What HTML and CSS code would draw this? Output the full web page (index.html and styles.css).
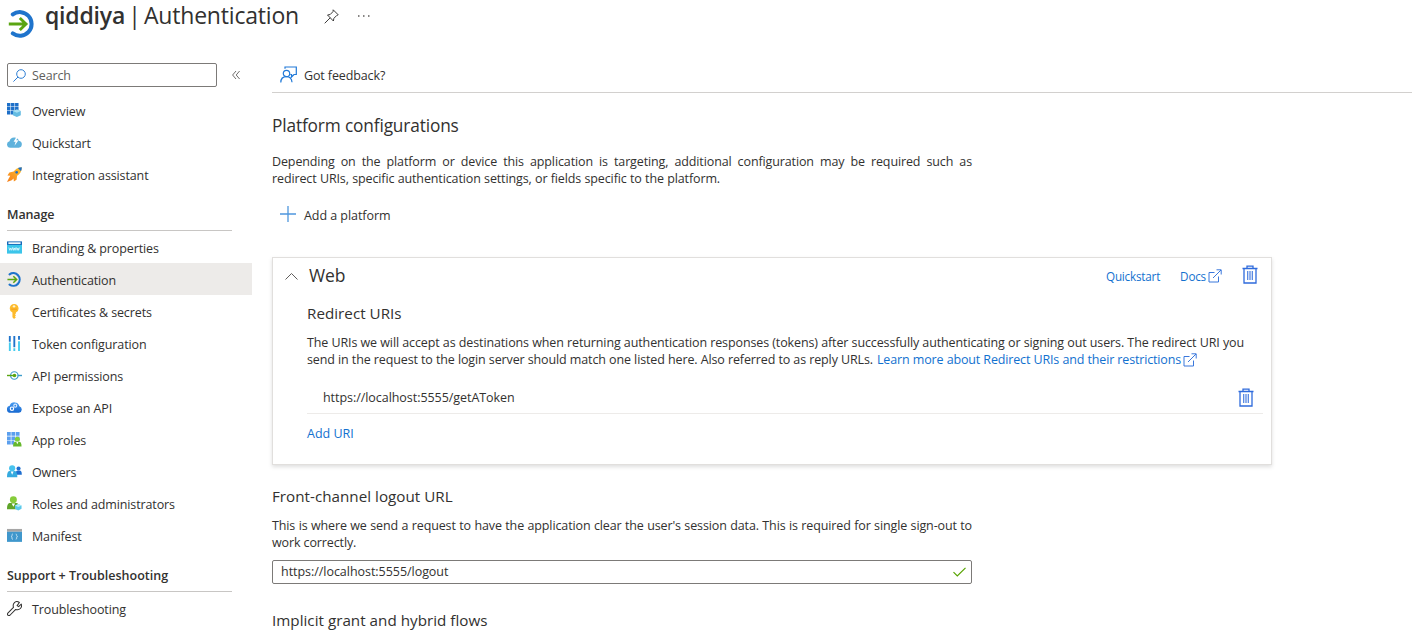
FILE: index.html
```html
<!DOCTYPE html>
<html lang="en">
<head>
<meta charset="utf-8">
<title>qiddiya | Authentication</title>
<link rel="stylesheet" href="styles.css">
</head>
<body>
<svg width="0" height="0" class="defs" aria-hidden="true">
  <defs>
    <linearGradient id="cloud" x1="0" y1="0" x2="0" y2="1"><stop offset="0" stop-color="#4a9cf0"/><stop offset="1" stop-color="#1668d0"/></linearGradient>
    <linearGradient id="fire" x1="1" y1="0" x2="0" y2="1"><stop offset="0" stop-color="#ffc62e"/><stop offset="1" stop-color="#f57c1a"/></linearGradient>
    <symbol id="auth" viewBox="0 0 28 28">
      <path d="M4.800 4.400A11.800 11.800 0 1 1 4.800 23.400" fill="none" stroke="#1f74cc" stroke-width="4" stroke-linecap="round"/>
      <path d="M.8 14H18M11.800 8l6.200 6-6.200 6" fill="none" stroke="#5aa512" stroke-width="2.900"/>
    </symbol>
    <symbol id="trash" viewBox="0 0 16 19">
      <path d="M.5 3.500h15M5 3V1.200h6V3M2 4v14h12V4" fill="none" stroke="#2f6bdc" stroke-width="1.300"/>
      <path d="M5.700 6v9M8 6v9M10.300 6v9" stroke="#4a7fe0" stroke-width="1.200"/>
    </symbol>
    <symbol id="ext" viewBox="0 0 14 14">
      <path d="M6.500 3.500H1v9.500h9.500V7.500M5 9l8-8M8.500.8h4.700v4.700" fill="none" stroke="#3b78dc" stroke-width="1"/>
    </symbol>
  </defs>
</svg>

<header class="header">
  <svg class="logo"><use href="#auth"/></svg>
  <h1 class="title"><b>qiddiya</b><span class="bar">|</span><span class="page-name">Authentication</span></h1>
  <svg class="pin" viewBox="0 0 15 15"><path d="M9.200.8l5 5-1.500.7-2.800 2.800-.5 2.700L3.500 6l2.700-.5L9 2.600zM6.200 8.800L.7 14.300" fill="none" stroke="#3c3b3a" stroke-width="1"/></svg>
  <svg class="dots" viewBox="0 0 12 2"><path d="M0 .3h1.500v1.400H0zM5 .3h1.500v1.400H5zM10 .3h1.500v1.400H10z" fill="#605e5c"/></svg>
</header>

<div class="body">
  <nav class="sidebar">
    <div class="search-row">
      <div class="search">
        <svg class="glass" viewBox="0 0 13 13"><circle cx="8" cy="5" r="4.300" fill="none" stroke="#2f7fd4"/><path d="M5 8L.4 12.600" stroke="#2f7fd4"/></svg>
        <span>Search</span>
      </div>
      <svg class="collapse" viewBox="0 0 8 8"><path d="M4 0L.6 4 4 8M7.600 0L4.200 4l3.400 4" fill="none" stroke="#605e5c" stroke-width=".9"/></svg>
    </div>
    <a class="item"><svg viewBox="0 0 16 16"><path d="M0 0h3.700v3.700H0zM4.300 0h3.700v3.700H4.300zM8.600 0h3.700v3.700H8.600zM0 4.300h3.700v3.700H0zM4.300 4.300h3.700v3.700H4.300zM8.600 4.300h3.700v3.700H8.600zM0 8.600h3.700v3.700H0zM4.300 8.600h3.700v3.700H4.300z" fill="#1d6fc8"/><path d="M10.500 6.800l4.200 1.600v4.600L10.500 15l-4.200-2V8.400z" fill="#65bce2"/><path d="M10.500 6.800l4.200 1.600-4.200 2-4.200-2z" fill="#a9e0f3"/></svg><span>Overview</span></a>
    <a class="item"><svg viewBox="0 0 16 16"><path d="M3.500 13.500A3.500 3.500 0 0 1 2.700 6.600 5.300 5.300 0 0 1 12.700 6 3.800 3.800 0 0 1 12.600 13.500z" fill="#5fb2dc"/><path d="M10.300 1.500L7 7.300h2.200L8 11.500l4.300-6H9.800L12.300 1.500z" fill="#fff"/></svg><span>Quickstart</span></a>
    <a class="item"><svg viewBox="0 0 16 16"><path d="M15.800.2c-4 .2-7 2-8.700 4.700L2.500 5.800.5 9l3 .2L2 12l-2 4 5-2 2-1.800.3 3.300 2.900-2 .6-4.300C13.800 7.500 15.800 4.500 15.800.2z" fill="url(#fire)"/><path d="M15.800.2c-1.600 0-3 .4-4.200.9l3.300 3.300c.6-1.300.9-2.700.9-4.200z" fill="#1d6fc8"/><circle cx="10.300" cy="5.700" r="1.400" fill="#1d6fc8"/></svg><span>Integration assistant</span></a>

    <h2 class="group">Manage</h2>
    <a class="item"><svg viewBox="0 0 16 16"><path d="M0 1.500h16v4H0z" fill="#1668b8"/><path d="M1.500 2.500h13v1.700h-13z" fill="#fff"/><path d="M0 5.200h16v9.300H0z" fill="#3bc5ea"/><path d="M2 8l1 3 1-2.500 1 2.500 1-3M6.200 8l.8 3 .8-2.500.8 2.500.8-3M10 8l.8 3 .8-2.500.8 2.500.8-3" fill="none" stroke="#e6fbff" stroke-width=".8"/></svg><span>Branding &amp; properties</span></a>
    <a class="item selected"><svg><use href="#auth"/></svg><span>Authentication</span></a>
    <a class="item"><svg viewBox="0 0 16 16"><path d="M7.500 0A4.700 4.700 0 0 1 9.500 9v1l-1 1 1 1-1 1.200 1 .9-2 1.900-1.700-1.800V9A4.700 4.700 0 0 1 7.500 0z" fill="#fdbb2d"/><circle cx="7.500" cy="2.500" r="1.300" fill="#fff3cf"/><path d="M4.500 5.500h6" stroke="#f29a1b" stroke-width="1"/></svg><span>Certificates &amp; secrets</span></a>
    <a class="item"><svg viewBox="0 0 16 16"><path d="M2 0h2v6H2zM6.800 0h2v12H6.800zM11.800 0h2v4h-2z" fill="#1f74cc"/><path d="M2 7h2v9H2zM6.800 13h2v3H6.800zM11.800 5.500h2V16h-2z" fill="#45cbee"/></svg><span>Token configuration</span></a>
    <a class="item"><svg viewBox="0 0 16 16"><circle cx="7.800" cy="8" r="4" fill="none" stroke="#3e9dcc" stroke-width="1.300"/><path d="M11.500 8H16" stroke="#3e9dcc" stroke-width="1.500"/><path d="M0 8h8" stroke="#5aa512" stroke-width="1.500"/><circle cx="8" cy="8" r="1.900" fill="#5aa512"/></svg><span>API permissions</span></a>
    <a class="item"><svg viewBox="0 0 16 16"><path d="M3.800 13.700A3.900 3.900 0 0 1 2.900 6 5.400 5.400 0 0 1 13.200 6.700a3.600 3.600 0 0 1-.5 7z" fill="url(#cloud)"/><circle cx="5.300" cy="9.300" r="1.800" fill="none" stroke="#fff" stroke-width="1.200"/><circle cx="8.800" cy="6" r="1.600" fill="none" stroke="#d5e8ff" stroke-width="1.200"/></svg><span>Expose an API</span></a>
    <a class="item"><svg viewBox="0 0 16 16"><path d="M0 0h4v4H0zM4.700 0h4v4h-4zM9.400 0h4v4h-4zM0 4.700h4v4H0zM4.700 4.700h4v4h-4zM9.400 4.700h4v4h-4zM0 9.400h4v4H0zM4.700 9.400h3v4h-3z" fill="#5b9fee"/><path d="M6.500 15.500c0-3.500 1-5 2.500-5h4c1.500 0 2.500 1.500 2.500 5z" fill="#66b82c"/><circle cx="11" cy="7.700" r="2.700" fill="#80cf3a"/><path d="M9.800 10.500h2.400L11 13z" fill="#fff"/></svg><span>App roles</span></a>
    <a class="item"><svg viewBox="0 0 16 16"><path d="M9 11.500c0-3.500 1-4.500 2.500-4.500h2c1.500 0 2.300 1.300 2.300 4.500z" fill="#1f6fd0"/><circle cx="12.300" cy="4.800" r="2.200" fill="#1f6fd0"/><path d="M0 14c0-4.500 1-6.500 3-6.500h5c2 0 3 2 3 6.500z" fill="#35aadf"/><circle cx="5.500" cy="4.500" r="3.300" fill="#48c3ee"/><path d="M4 8h3l-1.500 3.500z" fill="#fff"/></svg><span>Owners</span></a>
    <a class="item"><svg viewBox="0 0 16 16"><path d="M0 14c0-4.500 1.200-6.500 3.500-6.500h6c2.300 0 3.500 2 3.500 6.500z" fill="#5fa52a"/><circle cx="6.800" cy="4" r="3.700" fill="#86cc3a"/><path d="M5 8h3.600l-1.800 3.500z" fill="#fff"/><path d="M12 8.500l3.500 1.700v3.300L12 15.500l-3.500-2v-3.300z" fill="#5cc9ea"/><path d="M12 8.500l3.500 1.700-3.500 1.600-3.500-1.600z" fill="#b0ecf8"/></svg><span>Roles and administrators</span></a>
    <a class="item"><svg viewBox="0 0 16 16"><path d="M0 1h16v3H0z" fill="#a6a6a6"/><path d="M0 4h16v10.800H0z" fill="#3f97cc"/><path d="M6.300 6.500c-1 0-1 .5-1 1.300s0 1.200-.8 1.400c.8.200.8.700.8 1.500s0 1.300 1 1.300M9.300 6.500c1 0 1 .5 1 1.300s0 1.200.8 1.400c-.8.200-.8.700-.8 1.500s0 1.300-1 1.300" fill="none" stroke="#d9eefa" stroke-width=".9"/></svg><span>Manifest</span></a>

    <h2 class="group support">Support + Troubleshooting</h2>
    <a class="item"><svg viewBox="0 0 16 16"><path d="M10.800 4.900L13.200 1.600c-1.700-1.200-4.200-1.100-5.500.4C6.500 3.300 6.400 5.200 6.900 6.800L.9 13c-1.200 1.500.7 3.500 2.200 2.200l6.200-6.200c1.600.6 3.700.3 5-1 1.400-1.400 1.500-3.200.9-4.700L12.400 6z" fill="none" stroke="#323130" stroke-width="1.100" stroke-linejoin="round"/></svg><span>Troubleshooting</span></a>
  </nav>

  <main class="main">
    <div class="toolbar">
      <svg class="feedback" viewBox="0 0 17 17"><circle cx="6.500" cy="7.500" r="3.200" fill="none" stroke="#2079d8" stroke-width="1.200"/><path d="M.8 16.500c0-4 2.500-5.800 5.700-5.800s5.200 1.800 5.500 5.500M5 2.800V1h11.300v7.500h-2.300L11.500 11V8.500h-1.200" fill="none" stroke="#2079d8" stroke-width="1.200"/></svg>
      <span>Got feedback?</span>
    </div>
    <h2 class="section">Platform configurations</h2>
    <p class="text intro">
      <span class="line full">Depending on the platform or device this application is targeting, additional configuration may be required such as</span>
      <span class="line l448">redirect URIs, specific authentication settings, or fields specific to the platform.</span>
    </p>
    <div class="add">
      <svg viewBox="0 0 16 16"><path d="M0 8h16M8 0v16" stroke="#4f97de" stroke-width="1.300"/></svg>
      <span>Add a platform</span>
    </div>

    <section class="card">
      <div class="card-head">
        <svg class="chev" viewBox="0 0 13 7"><path d="M.5 6.500l6-6 6 6" fill="none" stroke="#605e5c"/></svg>
        <h3 class="web">Web</h3>
        <a class="link small quick">Quickstart</a>
        <a class="link small">Docs</a><svg class="ext"><use href="#ext"/></svg>
        <svg class="trash"><use href="#trash"/></svg>
      </div>
      <h4 class="sub">Redirect URIs</h4>
      <p class="text">
        <span class="line l937">The URIs we will accept as destinations when returning authentication responses (tokens) after successfully authenticating or signing out users. The redirect URI you</span>
        <span class="row"><span class="line l566">send in the request to the login server should match one listed here. Also referred to as reply URLs.</span><a class="link line l304">Learn more about Redirect URIs and their restrictions</a><svg class="ext"><use href="#ext"/></svg></span>
      </p>
      <div class="uri"><span>https://localhost:5555/getAToken</span><svg class="trash"><use href="#trash"/></svg></div>
      <a class="link add-uri">Add URI</a>
    </section>

    <h4 class="sub logout">Front-channel logout URL</h4>
    <p class="text">
      <span class="line full">This is where we send a request to have the application clear the user's session data. This is required for single sign-out to</span>
      <span class="line l83">work correctly.</span>
    </p>
    <div class="field"><span>https://localhost:5555/logout</span><svg viewBox="0 0 13 10"><path d="M.5 5.200L4.300 9 12.500.8" fill="none" stroke="#57a300" stroke-width="1.200"/></svg></div>
    <h4 class="sub implicit">Implicit grant and hybrid flows</h4>
  </main>
</div>
</body>
</html>
```
FILE: styles.css
```css
* { box-sizing: border-box; }
body {
  margin: 0;
  height: 633px;
  overflow: hidden;
  background: #fff;
  color: #323130;
  font-family: "Open Sans", "Noto Sans", sans-serif;
  font-size: 12.5px;
  letter-spacing: -0.12px;
  white-space: nowrap;
}
h1, h2, h3, h4, p { margin: 0; font-weight: 400; }
svg { display: block; flex: none; }
.defs { position: absolute; }

.header { display: flex; align-items: flex-start; height: 63px; padding-left: 8px; }
.logo { width: 28px; height: 28px; margin-top: 10px; }
.title { display: flex; margin-left: 9px; font-size: 23px; line-height: 31px; letter-spacing: -0.2px; }
.title b { font-weight: 600; width: 80px; }
.bar { width: 19px; text-align: center; }
.page-name { width: 180px; }
.pin { width: 15px; height: 15px; margin: 9px 0 0 0; }
.dots { width: 12px; height: 2px; margin: 15px 0 0 19px; }

.body { display: flex; }
.sidebar { width: 252px; margin-right: 20px; flex: none; }
.search-row { display: flex; align-items: center; height: 24px; margin-bottom: 7px; padding-left: 7px; }
.search { display: flex; align-items: center; gap: 6px; width: 210px; height: 24px; padding-left: 5px; border: 1px solid #7c7a78; border-radius: 2px; color: #605e5c; }
.glass { width: 13px; height: 13px; }
.collapse { width: 8px; height: 8px; margin-left: 15px; }
.item { display: flex; align-items: center; gap: 10px; height: 32px; padding-left: 7px; }
.item svg { width: 15px; height: 15px; }
.item span { padding-top: 2px; }
.selected { background: #edebe9; }
.group { margin: 9px 20px 0 7px; height: 32px; padding-top: 1px; border-bottom: 1px solid #c8c6c4; line-height: 29px; font-size: 12.5px; font-weight: 600; }
.support { letter-spacing: 0; }

.main { width: 1140px; }
.toolbar { display: flex; gap: 7px; height: 30px; padding-left: 8px; border-bottom: 1px solid #d2d0ce; line-height: 25px; }
.feedback { width: 17px; height: 17px; margin-top: 3px; }
.section { margin-top: 20px; font-size: 17.3px; line-height: 26px; letter-spacing: -0.15px; }
.text { line-height: 17px; }
.intro { margin-top: 14px; }
.line { display: block; text-align-last: justify; }
.full { width: 700px; }
.l448 { width: 448px; }
.l937 { width: 937px; }
.l566 { width: 566px; }
.l304 { width: 304px; letter-spacing: -0.16px; }
.l83 { width: 84px; }
.row { display: flex; gap: 4px; }
.row .ext { margin: 2px 0 0 -2px; }
.add { display: flex; align-items: center; gap: 8px; height: 24px; margin-top: 16px; padding-left: 8px; letter-spacing: -0.05px; }
.add svg { width: 16px; height: 16px; margin-top: -3px; }

.card { width: 1000px; height: 208px; margin-top: 30px; padding-left: 34px; border: 1px solid #e1dfdd; box-shadow: 0 2px 4px rgba(0, 0, 0, .13); }
.card-head { display: flex; height: 36px; margin-left: -22px; align-items: center; }
.chev { width: 13px; height: 7px; }
.web { flex: 1; margin: -2px 0 0 11px; font-size: 17.5px; }
.link { color: #1271cf; }
.small { font-size: 11.7px; margin-top: -1px; letter-spacing: -0.2px; }
.quick { margin-right: 20px; }
.ext { width: 14px; height: 14px; }
.card-head .ext { margin-left: 2px; }
.card-head .trash { margin: -4px 13px 0 20px; }
.trash { width: 16px; height: 19px; }
.sub { font-size: 15.2px; line-height: 20px; letter-spacing: 0.02px; }
.card .sub { margin: 9px 0 11px; }
.uri { display: flex; justify-content: space-between; width: 956px; height: 32px; margin-top: 14px; padding: 0 9px 0 16px; border-bottom: 1px solid #edebe9; align-items: center; letter-spacing: -0.05px; }
.add-uri { display: block; margin-top: 11px; line-height: 18px; letter-spacing: 0; }
.logout { margin: 21px 0 11px; }
.field { display: flex; align-items: center; justify-content: space-between; width: 700px; height: 24px; margin-top: 9px; padding: 0 5px 0 8px; border: 1px solid #7c7a78; border-radius: 2px; letter-spacing: -0.04px; }
.field span { padding-bottom: 2px; }
.field svg { width: 13px; height: 10px; }
.implicit { margin-top: 26px; }
```
